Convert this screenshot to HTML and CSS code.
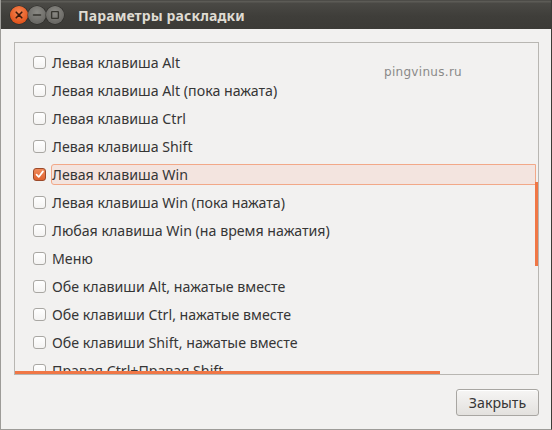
FILE: index.html
```html
<!DOCTYPE html>
<html lang="ru">
<head>
<meta charset="utf-8">
<title>Параметры раскладки</title>
<link rel="stylesheet" href="styles.css">
</head>
<body>
<div class="window">
  <div class="titlebar">
    <div class="controls">
      <span class="wbtn close"><svg width="18" height="18" viewBox="0 0 18 18"><path d="M6.2 6.2 L11.8 11.8 M11.8 6.2 L6.2 11.8" stroke="#3a1a0c" stroke-width="1.6" stroke-linecap="round"/></svg></span>
      <span class="wbtn"><svg width="18" height="18" viewBox="0 0 18 18"><path d="M5.5 9 H12.5" stroke="#36352f" stroke-width="1.6" stroke-linecap="round"/></svg></span>
      <span class="wbtn"><svg width="18" height="18" viewBox="0 0 18 18"><rect x="5.6" y="5.6" width="6.8" height="6.8" rx="0.6" fill="none" stroke="#36352f" stroke-width="1.4"/></svg></span>
    </div>
    <div class="title">Параметры раскладки</div>
  </div>
  <div class="content">
    <div class="frame">
      <ul class="list">
        <li class="row"><span class="cb"></span><span class="label">Левая клавиша Alt</span></li>
        <li class="row"><span class="cb"></span><span class="label">Левая клавиша Alt (пока нажата)</span></li>
        <li class="row"><span class="cb"></span><span class="label">Левая клавиша Ctrl</span></li>
        <li class="row"><span class="cb"></span><span class="label">Левая клавиша Shift</span></li>
        <li class="row"><span class="cb checked"><svg width="13" height="13" viewBox="0 0 13 13"><path d="M3 6.6 L5.6 9.4 L10.6 2.8" fill="none" stroke="#ffffff" stroke-width="2" stroke-linecap="round" stroke-linejoin="round"/></svg></span><span class="label focus">Левая клавиша Win</span></li>
        <li class="row"><span class="cb"></span><span class="label">Левая клавиша Win (пока нажата)</span></li>
        <li class="row"><span class="cb"></span><span class="label">Любая клавиша Win (на время нажатия)</span></li>
        <li class="row"><span class="cb"></span><span class="label">Меню</span></li>
        <li class="row"><span class="cb"></span><span class="label">Обе клавиши Alt, нажатые вместе</span></li>
        <li class="row"><span class="cb"></span><span class="label">Обе клавиши Ctrl, нажатые вместе</span></li>
        <li class="row"><span class="cb"></span><span class="label">Обе клавиши Shift, нажатые вместе</span></li>
        <li class="row"><span class="cb"></span><span class="label">Правая Ctrl+Правая Shift</span></li>
      </ul>
      <div class="watermark">pingvinus.ru</div>
      <div class="vscroll"></div>
      <div class="hscroll"></div>
    </div>
    <div class="footer">
      <button class="btn">Закрыть</button>
    </div>
  </div>
</div>
</body>
</html>
```
FILE: styles.css
```css
html, body {
  margin: 0;
  padding: 0;
  background: #f2f1f0;
}
.window {
  width: 552px;
  height: 430px;
  box-sizing: border-box;
  display: flex;
  flex-direction: column;
  background: #f2f1f0;
  border-left: 1px solid #9d9c98;
  border-right: 1px solid #3c3b37;
  border-bottom: 1px solid #9d9c98;
  font-family: "Noto Sans", "DejaVu Sans", sans-serif;
  overflow: hidden;
}
.titlebar {
  height: 29px;
  flex: none;
  box-sizing: border-box;
  display: flex;
  align-items: center;
  background: linear-gradient(#4d4c48 0px, #4d4c48 1px, #5c5b56 1px, #5c5b56 2px, #4a4945 3px, #3f3e3a 16px, #3c3b37 29px);
  padding-left: 9px;
  padding-top: 1px;
}
.controls {
  display: flex;
  gap: 0;
}
.wbtn {
  width: 18px;
  height: 18px;
  border-radius: 50%;
  display: flex;
  align-items: center;
  justify-content: center;
  box-sizing: border-box;
  background: radial-gradient(circle at 50% 35%, #8a8984, #6b6a66 70%);
  box-shadow: 0 0 0 0.5px #2c2b28;
}
.wbtn.close {
  background: radial-gradient(circle at 50% 35%, #f78754, #e2561e 70%);
}
.title {
  margin-left: 14px;
  color: #dfdbd2;
  font-weight: bold;
  font-size: 14px;
  letter-spacing: 0.1px;
}
.content {
  flex: 1;
  display: flex;
  flex-direction: column;
  padding: 13px 12px 0 13px;
}
.frame {
  position: relative;
  height: 333px;
  box-sizing: border-box;
  border: 1px solid #b8b6b2;
  overflow: hidden;
}
.list {
  list-style: none;
  margin: 0;
  padding: 5px 2px 0 18px;
}
.row {
  height: 28px;
  display: flex;
  align-items: center;
}
.cb {
  width: 13px;
  height: 13px;
  flex: none;
  box-sizing: border-box;
  border: 1px solid #a9a7a3;
  border-radius: 3px;
  background: linear-gradient(#ffffff, #f4f3f2);
  margin-right: 5px;
  display: flex;
  align-items: center;
  justify-content: center;
}
.cb.checked {
  background: linear-gradient(#f08a5a, #e0622f);
  border-color: #9c4a2a;
}
.label {
  flex: 1;
  height: 21px;
  box-sizing: border-box;
  border: 1px solid transparent;
  border-radius: 3px 0 0 3px;
  padding-left: 0;
  display: flex;
  align-items: center;
  font-size: 14.2px;
  color: #363636;
  white-space: nowrap;
}
.label.focus {
  background: #f3e4df;
  border-color: #f2a888;
}
.watermark {
  position: absolute;
  left: 369px;
  top: 22px;
  font-family: "DejaVu Sans", sans-serif;
  font-size: 12px;
  color: #8a8988;
  letter-spacing: 0.3px;
}
.vscroll {
  position: absolute;
  right: 0;
  top: 139px;
  width: 3px;
  height: 84px;
  background: #f07746;
}
.hscroll {
  position: absolute;
  left: 0;
  bottom: 0;
  width: 425px;
  height: 3px;
  background: #f07746;
}
.footer {
  display: flex;
  justify-content: flex-end;
  padding-top: 14px;
}
.btn {
  width: 83px;
  height: 27px;
  border: 1px solid #a8a6a2;
  border-radius: 3px;
  background: linear-gradient(#f6f5f4, #e3e1de);
  font-family: "Noto Sans", "DejaVu Sans", sans-serif;
  font-size: 14.2px;
  color: #363636;
  padding: 0;
  box-shadow: inset 0 1px 0 #ffffff;
}
```
